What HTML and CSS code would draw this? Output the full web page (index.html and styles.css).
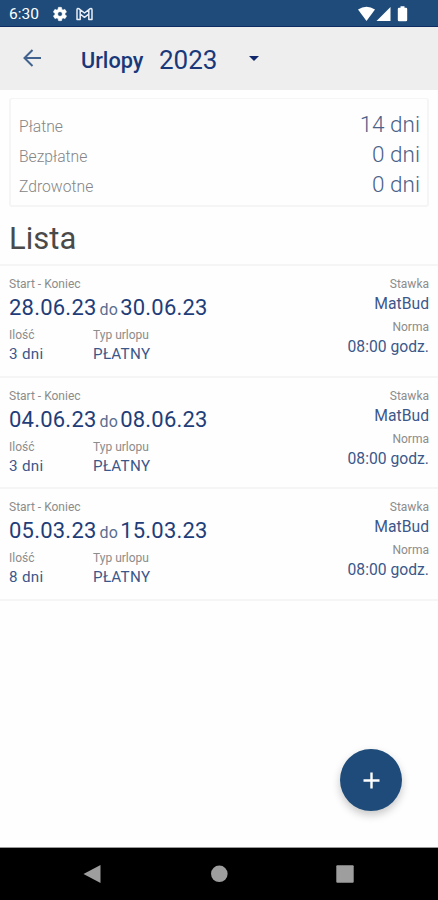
FILE: index.html
```html
<!DOCTYPE html>
<html lang="pl">
<head>
    <meta charset="UTF-8">
    <title>Urlopy</title>
    <link rel="stylesheet" href="styles.css">
</head>
<body>
    <div class="status-bar">
        <span class="time">6:30</span>
        <svg class="icon-gear" viewBox="0 0 24 24" width="16" height="16">
            <path fill="#fff" stroke="#fff" stroke-width="0.8" d="M19.4 13c0-.3.1-.6.1-1s0-.7-.1-1l2.1-1.6c.2-.2.2-.4.1-.6l-2-3.5c-.1-.2-.4-.3-.6-.2l-2.5 1c-.5-.4-1.1-.7-1.7-1l-.4-2.6c0-.3-.2-.5-.5-.5h-4c-.2 0-.5.2-.5.4l-.4 2.7c-.6.2-1.1.6-1.7 1l-2.5-1c-.2-.1-.5 0-.6.2l-2 3.5c-.1.2-.1.5.1.6L4.5 11c0 .3-.1.6-.1 1s0 .7.1 1l-2.1 1.6c-.2.2-.2.4-.1.6l2 3.5c.1.2.4.3.6.2l2.5-1c.5.4 1.1.7 1.7 1l.4 2.6c0 .3.2.5.5.5h4c.2 0 .5-.2.5-.4l.4-2.7c.6-.2 1.1-.6 1.7-1l2.5 1c.2.1.5 0 .6-.2l2-3.5c.1-.2.1-.5-.1-.6L19.4 13zM12 15.5a3.5 3.5 0 1 1 0-7 3.5 3.5 0 0 1 0 7z"/>
        </svg>
        <svg class="icon-mail" viewBox="0 0 17 14" width="17" height="14">
            <path fill="none" stroke="#e9eef5" stroke-width="1.5" stroke-linejoin="round" d="M1 12.5V3Q1 1 2.8 1.7L8.5 6 14.2 1.7Q16 1 16 3V12.5H12.8V7L8.5 10.3 4.2 7V12.5ZM4.2 7V3M12.8 7V3"/>
        </svg>
        <svg class="icon-system" viewBox="0 0 50 16" width="50" height="16">
            <path fill="#fff" d="M0 3.5Q8.5-2 17 3.5L8.5 15z"/>
            <path fill="#fff" d="M32.5 1V15H18.5z"/>
            <path fill="#fff" d="M42.5 0.3h4v1.5h1.5q1.2 0 1.2 1.2V14q0 1.2-1.2 1.2h-7q-1.2 0-1.2-1.2V3q0-1.2 1.2-1.2H42.5z"/>
        </svg>
    </div>

    <header class="toolbar">
        <svg class="back" viewBox="0 0 18 18" width="18" height="18">
            <path fill="none" stroke="#41638d" stroke-width="2" d="M18 9H1.5M9.5 1L1.5 9l8 8"/>
        </svg>
        <h1>Urlopy</h1>
        <span class="year">2023</span>
        <span class="caret"></span>
    </header>

    <main>
        <section class="summary">
            <div class="summary-row"><span>Płatne</span><b>14 dni</b></div>
            <div class="summary-row"><span>Bezpłatne</span><b>0 dni</b></div>
            <div class="summary-row"><span>Zdrowotne</span><b>0 dni</b></div>
        </section>

        <h2>Lista</h2>

        <ul class="list">
            <li class="leave">
                <div class="leave-main">
                    <div class="label">Start - Koniec</div>
                    <div class="dates"><span>28.06.23</span><small>do</small><span>30.06.23</span></div>
                    <div class="details">
                        <div class="amount"><div class="label">Ilość</div><div class="value">3 dni</div></div>
                        <div class="type"><div class="label">Typ urlopu</div><div class="value">PŁATNY</div></div>
                    </div>
                </div>
                <div class="leave-side">
                    <div class="label">Stawka</div>
                    <div class="value">MatBud</div>
                    <div class="label">Norma</div>
                    <div class="value">08:00 godz.</div>
                </div>
            </li>
            <li class="leave">
                <div class="leave-main">
                    <div class="label">Start - Koniec</div>
                    <div class="dates"><span>04.06.23</span><small>do</small><span>08.06.23</span></div>
                    <div class="details">
                        <div class="amount"><div class="label">Ilość</div><div class="value">3 dni</div></div>
                        <div class="type"><div class="label">Typ urlopu</div><div class="value">PŁATNY</div></div>
                    </div>
                </div>
                <div class="leave-side">
                    <div class="label">Stawka</div>
                    <div class="value">MatBud</div>
                    <div class="label">Norma</div>
                    <div class="value">08:00 godz.</div>
                </div>
            </li>
            <li class="leave">
                <div class="leave-main">
                    <div class="label">Start - Koniec</div>
                    <div class="dates"><span>05.03.23</span><small>do</small><span>15.03.23</span></div>
                    <div class="details">
                        <div class="amount"><div class="label">Ilość</div><div class="value">8 dni</div></div>
                        <div class="type"><div class="label">Typ urlopu</div><div class="value">PŁATNY</div></div>
                    </div>
                </div>
                <div class="leave-side">
                    <div class="label">Stawka</div>
                    <div class="value">MatBud</div>
                    <div class="label">Norma</div>
                    <div class="value">08:00 godz.</div>
                </div>
            </li>
        </ul>
    </main>

    <button class="fab" aria-label="Dodaj urlop">
        <svg viewBox="0 0 17 17" width="17" height="17">
            <path stroke="#fff" stroke-width="2.4" d="M8.5 0.5v16M0.5 8.5h16"/>
        </svg>
    </button>

    <nav class="nav-bar">
        <svg viewBox="0 0 18 18" width="18" height="18"><path fill="#9e9e9e" d="M17.5 0V18L0.5 9z"/></svg>
        <svg viewBox="0 0 18 18" width="18" height="18"><circle fill="#9e9e9e" cx="9.3" cy="8.8" r="8.3"/></svg>
        <svg viewBox="0 0 18 18" width="18" height="18"><rect fill="#9e9e9e" x="0.3" y="0.3" width="17.4" height="17.4" rx="1"/></svg>
    </nav>
</body>
</html>
```
FILE: styles.css
```css
* {
    box-sizing: border-box;
}

body {
    margin: 0;
    height: 900px;
    display: flex;
    flex-direction: column;
    position: relative;
    overflow: hidden;
    background: #fefefe;
    font-family: Roboto, sans-serif;
    color: #1b3a70;
}

.status-bar {
    display: flex;
    align-items: center;
    height: 27px;
    padding: 1px 30px 0 9px;
    background: #1e4b79;
    border-bottom: 1px solid #0d2c66;
    color: #fff;
}

.time {
    width: 43px;
    font-size: 15.5px;
    padding-top: 1px;
}

.icon-mail {
    margin-left: 8px;
}

.icon-system {
    margin-left: auto;
}

.toolbar {
    display: flex;
    align-items: center;
    height: 63px;
    padding: 2px 23px 0;
    background: #eee;
}

.back {
    margin-top: -3px;
}

.toolbar h1 {
    margin: 1px 0 0 40px;
    width: 78px;
    font-size: 21.7px;
    font-weight: 500;
    color: #18387a;
}

.year {
    width: 90px;
    font-size: 26px;
    color: #18387a;
}

.caret {
    margin-top: -2px;
    border: 5px solid transparent;
    border-top-color: #10286b;
    border-bottom: 0;
}

main {
    flex: 1;
}

.summary {
    height: 109px;
    margin: 8px 9px 0;
    padding: 12px 7px 0 8px;
    border: 2px solid #f5f5f5;
    border-top-width: 1px;
    border-radius: 3px;
}

.summary-row {
    display: flex;
    justify-content: space-between;
    align-items: baseline;
    height: 30px;
    font-size: 15.7px;
    font-weight: 300;
    line-height: 26px;
    color: #858585;
}

.summary-row b {
    font-size: 22.5px;
    font-weight: 300;
    color: #4a6289;
}

h2 {
    margin: 12px 9px 0;
    font-size: 31px;
    font-weight: 400;
    line-height: 40px;
    color: #4a4a4a;
}

.list {
    margin: 5px 0 0;
    padding: 0;
    list-style: none;
    border-top: 2px solid #f5f5f5;
}

.leave {
    display: flex;
    justify-content: space-between;
    height: 111.6px;
    padding: 10px 9px 0;
    border-bottom: 2px solid #f5f5f5;
}

.label {
    font-size: 12px;
    line-height: 16px;
    color: #8c8c8c;
}

.value {
    font-size: 15.2px;
    line-height: 22px;
    letter-spacing: 0.3px;
    color: #3c588a;
}

.dates {
    display: flex;
    align-items: baseline;
    font-size: 22px;
    line-height: 32px;
    letter-spacing: 0.22px;
    color: #1f3d78;
}

.dates small {
    margin: 0 2px 0 3px;
    font-size: 16px;
    color: #5a6e90;
}

.details {
    display: flex;
    margin-top: 1px;
}

.amount {
    width: 84px;
}

.leave-side {
    text-align: right;
}

.leave-side .value {
    font-size: 15.7px;
    line-height: 23px;
    letter-spacing: 0;
}

.leave-side .label + .value + .label {
    margin-top: 4px;
}

.fab {
    position: absolute;
    right: 36px;
    bottom: 89px;
    width: 62px;
    height: 62px;
    padding: 0;
    display: flex;
    align-items: center;
    justify-content: center;
    border: none;
    border-radius: 50%;
    background: #1e4b79;
    box-shadow: 0 4px 8px rgba(0, 0, 0, 0.22);
}

.nav-bar {
    display: flex;
    justify-content: space-between;
    height: 53px;
    padding: 17px 84px 0 83px;
    border-top: 1px solid #999;
    background: #000;
}
```
